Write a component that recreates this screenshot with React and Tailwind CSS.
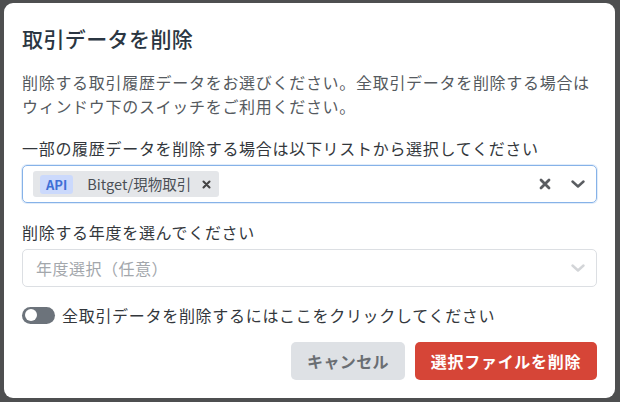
import React from "react";

const font = { fontFamily: '"Noto Sans CJK JP", "Noto Sans", sans-serif' };

function XIcon({ className, strokeWidth = 3 }) {
  return (
    <svg viewBox="0 0 12 12" className={className} fill="none" stroke="currentColor" strokeWidth={strokeWidth} strokeLinecap="round">
      <path d="M2 2 L10 10 M10 2 L2 10" />
    </svg>
  );
}

function Chevron({ className }) {
  return (
    <svg viewBox="0 0 14 8" className={className} fill="none" stroke="currentColor" strokeWidth="2.4" strokeLinecap="round" strokeLinejoin="round">
      <path d="M1.5 1.5 L7 6.5 L12.5 1.5" />
    </svg>
  );
}

export default function App() {
  return (
    <div className="w-[620px] h-[402px] bg-[#4e4f50] pl-[4px] pt-[3px] overflow-hidden" style={font}>
      <div className="w-[611px] h-[395px] bg-white rounded-[9px] px-[18px] pt-[21px] pb-[18px] flex flex-col">
        <h2 className="text-[21px] leading-[28px] tracking-[0.4px] text-[#2b3642] font-medium">取引データを削除</h2>
        <p className="mt-[18px] text-[16px] leading-[24px] tracking-[0.7px] text-[#555a60]">
          削除する取引履歴データをお選びください。全取引データを削除する場合は
          <br />
          ウィンドウ下のスイッチをご利用ください。
        </p>
        <div className="mt-[18px] text-[16px] leading-[24px] tracking-[0.7px] text-[#33373c]">
          一部の履歴データを削除する場合は以下リストから選択してください
        </div>
        <div className="mt-[5px] h-[38px] border border-[#86b2e8] rounded-[5px] shadow-[0_0_0_1px_rgba(134,178,232,0.25)] flex items-center pl-[10px] pr-[11px]">
          <div className="h-[26px] bg-[#e4e6e9] rounded-[3px] flex items-center pl-[7px] pr-[8px]">
            <span className="h-[19px] px-[6px] rounded-[3px] bg-[#cbd9fc] text-[#3f6fd6] text-[13px] leading-[19px] font-bold">API</span>
            <span className="ml-[14px] text-[14.5px] leading-[20px] text-[#4a4f55]">Bitget/現物取引</span>
            <XIcon className="ml-[11px] w-[9px] h-[9px] text-[#444]" strokeWidth={2.8} />
          </div>
          <div className="flex-1" />
          <XIcon className="w-[12px] h-[12px] text-[#5a5d61]" strokeWidth={2.8} />
          <Chevron className="ml-[20px] w-[14px] h-[8px] text-[#5a5d61]" />
        </div>
        <div className="mt-[17px] text-[16px] leading-[24px] tracking-[0.7px] text-[#33373c]">削除する年度を選んでください</div>
        <div className="mt-[5px] h-[38px] border border-[#dcdfe3] rounded-[5px] flex items-center pl-[13px] pr-[11px]">
          <span className="text-[16px] tracking-[0.5px] text-[#a3a7ac]">年度選択（任意）</span>
          <div className="flex-1" />
          <Chevron className="w-[14px] h-[8px] text-[#d3d5d8]" />
        </div>
        <div className="mt-[16px] h-[24px] flex items-center">
          <div className="w-[33px] h-[17px] rounded-full bg-[#6c737b] flex items-center pl-[3px]">
            <div className="w-[12px] h-[12px] rounded-full bg-white" />
          </div>
          <span className="ml-[7px] text-[16px] leading-[24px] tracking-[0.7px] text-[#33373c]">全取引データを削除するにはここをクリックしてください</span>
        </div>
        <div className="mt-[15px] flex justify-end gap-[10px]">
          <button className="w-[114px] h-[38px] rounded-[5px] bg-[#dee1e5] text-[#6a6e73] text-[16px] font-bold tracking-[0.4px]">キャンセル</button>
          <button className="w-[182px] h-[38px] rounded-[5px] bg-[#d64537] text-white text-[16px] font-bold tracking-[0.7px]">選択ファイルを削除</button>
        </div>
      </div>
    </div>
  );
}
